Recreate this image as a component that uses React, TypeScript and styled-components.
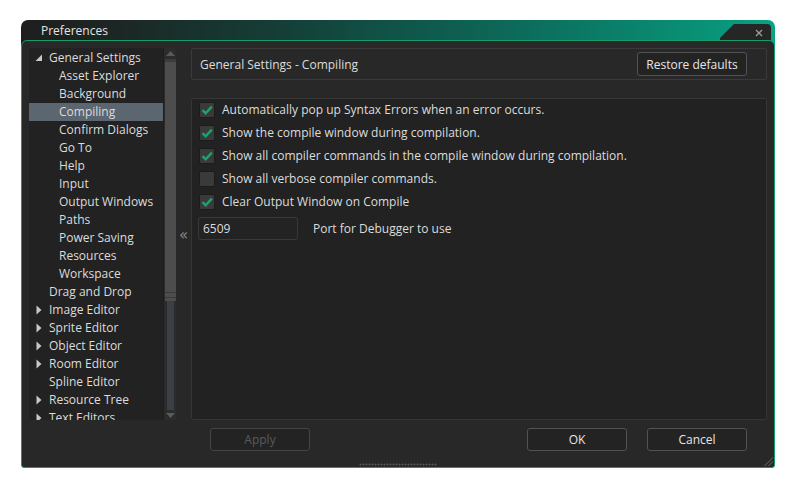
import React from "react";
import styled, { createGlobalStyle } from "styled-components";

const Global = createGlobalStyle`
  html, body { margin: 0; padding: 0; background: #ffffff; }
  body { font-family: "Open Sans", "Noto Sans", sans-serif; font-size: 12px; color: #dcdcdc; }
  * { box-sizing: border-box; }
`;

const Page = styled.div`
  padding: 20px 0 0 21px;
`;

const Window = styled.div`
  width: 754px;
  display: flex;
  flex-direction: column;
`;

const TitleBar = styled.div`
  height: 26px;
  margin-bottom: -6px;
  border-radius: 7px 7px 0 0;
  background: linear-gradient(to right, #1e1e1e 0%, #1c2624 12%, #143f37 35%, #0d6556 62%, #089a7d 96%, #0aa483 100%);
  display: flex;
  justify-content: space-between;
  align-items: flex-start;
`;

const Title = styled.div`
  padding: 2px 0 0 20px;
  font-size: 12px;
  line-height: 18px;
  color: #e4e4e4;
`;

const CloseTab = styled.div`
  margin: 4px 4px 0 0;
  width: 51px;
  height: 22px;
  background: #262626;
  border-top-right-radius: 4px;
  clip-path: polygon(14px 0, 100% 0, 100% 100%, 0 100%, 0 14px);
  display: flex;
  justify-content: flex-end;
  padding: 5px 8px 0 0;
`;

const Body = styled.div`
  height: 428px;
  border: 1px solid #169e69;
  border-radius: 6px 6px 3px 3px;
  background: #282828;
  padding: 7px 7px 0 7px;
  display: flex;
  flex-direction: column;
  position: relative;
`;

const Main = styled.div`
  height: 372px;
  display: flex;
`;

const Tree = styled.div`
  width: 147px;
  display: flex;
  background: #222222;
`;

const TreeList = styled.div`
  width: 134px;
  overflow: hidden;
  padding-top: 1px;
`;

const Row = styled.div<{ $depth: number; $selected?: boolean }>`
  height: 18px;
  line-height: 18px;
  position: relative;
  white-space: nowrap;
  padding-left: ${(p) => (p.$depth ? 30 : 20)}px;
  background: ${(p) => (p.$selected ? "#5c6670" : "transparent")};
  color: #dcdcdc;
`;

const Arrow = styled.span`
  position: absolute;
  left: 6px;
  top: 0;
  height: 18px;
  display: flex;
  align-items: center;
`;

const Scrollbar = styled.div`
  width: 13px;
  background: #2c2c2c;
  border-left: 1px solid #1d1d1d;
  display: flex;
  flex-direction: column;
  align-items: center;
`;

const ScrollArrow = styled.div`
  height: 10px;
  display: flex;
  align-items: center;
  justify-content: center;
`;

const Thumb = styled.div`
  width: 11px;
  height: 242px;
  background: #4d4d4d;
  border-top: 3px solid #3b3b3b;
  margin-top: 1px;
  position: relative;
  &::after {
    content: "";
    position: absolute;
    left: 0;
    right: 0;
    bottom: 3px;
    height: 4px;
    border-top: 1px solid #3a3a3a;
    border-bottom: 1px solid #3a3a3a;
  }
`;

const Track = styled.div`
  width: 7px;
  flex: 1;
  background: #3b4047;
`;

const Splitter = styled.div`
  width: 15px;
  display: flex;
  align-items: center;
  justify-content: center;
  color: #8a8a8a;
  font-family: "DejaVu Sans", sans-serif;
  font-size: 15px;
  padding-top: 1px;
`;

const Right = styled.div`
  flex: 1;
  display: flex;
  flex-direction: column;
`;

const Header = styled.div`
  height: 32px;
  border: 1px solid #3a3a3a;
  border-radius: 2px;
  display: flex;
  align-items: center;
  justify-content: space-between;
  padding: 0 19px 0 8px;
`;

const Button = styled.button<{ $disabled?: boolean }>`
  height: 24px;
  background: #232323;
  border: 1px solid ${(p) => (p.$disabled ? "#444444" : "#525252")};
  border-radius: 3px;
  color: ${(p) => (p.$disabled ? "#5a5a5a" : "#e6e6e6")};
  font-family: "Open Sans", "Noto Sans", sans-serif;
  font-size: 12px;
  padding: 0;
`;

const RestoreButton = styled(Button)`
  width: 110px;
`;

const DialogButton = styled(Button)`
  width: 100px;
  height: 23px;
`;

const Content = styled.div`
  margin-top: 18px;
  flex: 1;
  background: #222222;
  border: 1px solid #363636;
  border-radius: 2px;
  padding: 0 0 0 7px;
`;

const CheckRow = styled.div`
  height: 23px;
  padding-bottom: 2px;
  display: flex;
  align-items: center;
  gap: 7px;
`;

const Box = styled.div`
  width: 16px;
  height: 16px;
  background: #3a3a3a;
  border: 1px solid #1c1c1c;
  border-radius: 2px;
  display: flex;
  align-items: center;
  justify-content: center;
`;

const InputRow = styled.div`
  margin: 3px 0 0 -1px;
  display: flex;
  align-items: center;
  gap: 15px;
`;

const Input = styled.div`
  width: 100px;
  height: 23px;
  border: 1px solid #383838;
  border-radius: 2px;
  background: #232323;
  padding-left: 4px;
  line-height: 21px;
`;

const Footer = styled.div`
  margin-top: 8px;
  height: 23px;
  display: flex;
  align-items: center;
  padding: 0 20px 0 181px;
  gap: 20px;
`;

const Spacer = styled.div`
  flex: 1;
`;

const Grip = styled.div`
  margin: 12px auto 0;
  width: 78px;
  height: 3px;
  background-image: radial-gradient(circle, #555555 0.9px, transparent 1.1px);
  background-size: 3px 3px;
`;

const Corner = styled.div`
  position: absolute;
  right: 1px;
  bottom: 1px;
  width: 9px;
  height: 9px;
  background: linear-gradient(135deg, transparent 50%, #4a4a4a 50%, #4a4a4a 60%, transparent 60%, transparent 72%, #4a4a4a 72%, #4a4a4a 82%, transparent 82%);
`;

const Check = () => (
  <svg width="12" height="10" viewBox="0 0 12 10">
    <path d="M1.5 5.2 L4.6 8.2 L10.8 1.6" fill="none" stroke="#17a56b" strokeWidth="2.4" />
  </svg>
);

const Expanded = () => (
  <svg width="8" height="8" viewBox="0 0 8 8">
    <polygon points="7,0.5 7,7 0.5,7" fill="#c8c8c8" />
  </svg>
);

const Collapsed = () => (
  <svg width="8" height="10" viewBox="0 0 8 10">
    <polygon points="1.5,0.5 6.5,5 1.5,9.5" fill="#c8c8c8" />
  </svg>
);

type Item = { label: string; depth: number; arrow?: "open" | "closed"; selected?: boolean };

const items: Item[] = [
  { label: "General Settings", depth: 0, arrow: "open" },
  { label: "Asset Explorer", depth: 1 },
  { label: "Background", depth: 1 },
  { label: "Compiling", depth: 1, selected: true },
  { label: "Confirm Dialogs", depth: 1 },
  { label: "Go To", depth: 1 },
  { label: "Help", depth: 1 },
  { label: "Input", depth: 1 },
  { label: "Output Windows", depth: 1 },
  { label: "Paths", depth: 1 },
  { label: "Power Saving", depth: 1 },
  { label: "Resources", depth: 1 },
  { label: "Workspace", depth: 1 },
  { label: "Drag and Drop", depth: 0 },
  { label: "Image Editor", depth: 0, arrow: "closed" },
  { label: "Sprite Editor", depth: 0, arrow: "closed" },
  { label: "Object Editor", depth: 0, arrow: "closed" },
  { label: "Room Editor", depth: 0, arrow: "closed" },
  { label: "Spline Editor", depth: 0 },
  { label: "Resource Tree", depth: 0, arrow: "closed" },
  { label: "Text Editors", depth: 0, arrow: "closed" },
];

const checks: { label: string; checked: boolean }[] = [
  { label: "Automatically pop up Syntax Errors when an error occurs.", checked: true },
  { label: "Show the compile window during compilation.", checked: true },
  { label: "Show all compiler commands in the compile window during compilation.", checked: true },
  { label: "Show all verbose compiler commands.", checked: false },
  { label: "Clear Output Window on Compile", checked: true },
];

export default function App() {
  return (
    <Page>
      <Global />
      <Window>
        <TitleBar>
          <Title>Preferences</Title>
          <CloseTab>
            <svg width="8" height="8" viewBox="0 0 8 8">
              <path d="M1 1 L7 7 M7 1 L1 7" stroke="#9c9c9c" strokeWidth="1.4" />
            </svg>
          </CloseTab>
        </TitleBar>
        <Body>
          <Main>
            <Tree>
              <TreeList>
                {items.map((it) => (
                  <Row key={it.label} $depth={it.depth} $selected={it.selected}>
                    {it.arrow && <Arrow>{it.arrow === "open" ? <Expanded /> : <Collapsed />}</Arrow>}
                    {it.label}
                  </Row>
                ))}
              </TreeList>
              <Scrollbar>
                <ScrollArrow>
                  <svg width="9" height="5" viewBox="0 0 9 5">
                    <polygon points="0,5 9,5 4.5,0" fill="#5a5a5a" />
                  </svg>
                </ScrollArrow>
                <Thumb />
                <Track />
                <ScrollArrow>
                  <svg width="9" height="5" viewBox="0 0 9 5">
                    <polygon points="0,0 9,0 4.5,5" fill="#5a5a5a" />
                  </svg>
                </ScrollArrow>
              </Scrollbar>
            </Tree>
            <Splitter>«</Splitter>
            <Right>
              <Header>
                <span>General Settings - Compiling</span>
                <RestoreButton>Restore defaults</RestoreButton>
              </Header>
              <Content>
                {checks.map((c) => (
                  <CheckRow key={c.label}>
                    <Box>{c.checked && <Check />}</Box>
                    <span>{c.label}</span>
                  </CheckRow>
                ))}
                <InputRow>
                  <Input>6509</Input>
                  <span>Port for Debugger to use</span>
                </InputRow>
              </Content>
            </Right>
          </Main>
          <Footer>
            <DialogButton $disabled>Apply</DialogButton>
            <Spacer />
            <DialogButton>OK</DialogButton>
            <DialogButton>Cancel</DialogButton>
          </Footer>
          <Grip />
          <Corner />
        </Body>
      </Window>
    </Page>
  );
}
